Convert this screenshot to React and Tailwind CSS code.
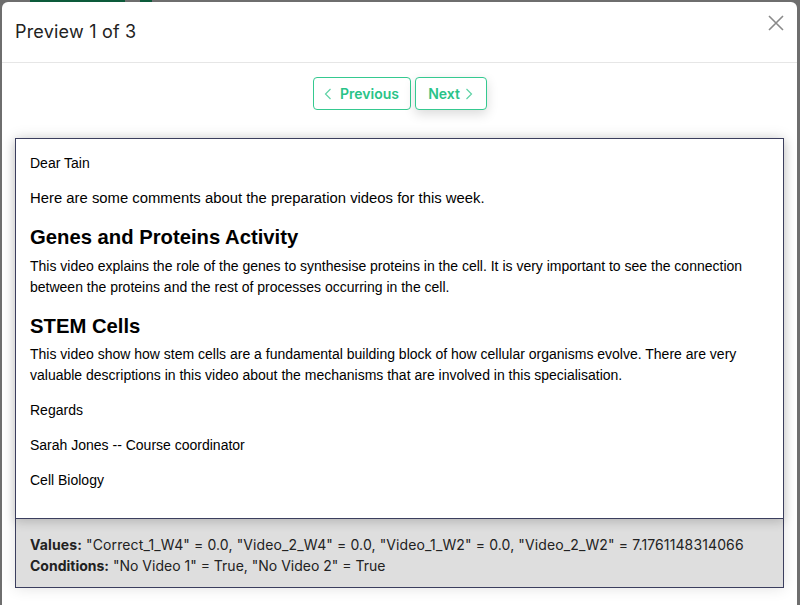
import React from "react";

export default function App() {
  return (
    <div className="w-[800px] h-[605px] overflow-hidden bg-[#6e6e6e] relative">
      <div className="h-[2px] flex">
        <div className="ml-[30px] w-[95px] h-[2px] bg-[#0c5a3a]" />
        <div className="ml-[15px] w-[12px] h-[2px] bg-[#0c5a3a]" />
      </div>
      <div className="ml-[2px] w-[795px] h-[640px] bg-white rounded-t-[6px] font-['Inter','Noto_Sans',sans-serif]">
        <div className="h-[61px] border-b border-[#e6e6e6] flex items-center justify-between pl-[13px] pr-[12px]">
          <div className="text-[18px] text-[#222] leading-none tracking-[0.2px]">Preview 1 of 3</div>
          <svg width="18" height="18" viewBox="0 0 18 18" className="mt-[-18px]">
            <path d="M2 2 L16 16 M16 2 L2 16" stroke="#8a8a8a" strokeWidth="1.6" fill="none" />
          </svg>
        </div>
        <div className="flex justify-center gap-[4px] pt-[14px]">
          <button className="h-[33px] w-[98px] border border-[#35c990] rounded-[4px] flex items-center justify-center gap-[8px] text-[#29c388] text-[14px] font-semibold bg-white">
            <svg width="8" height="12" viewBox="0 0 8 12">
              <path d="M6.5 1 L1.5 6 L6.5 11" stroke="#5fd3a6" strokeWidth="1.2" fill="none" />
            </svg>
            Previous
          </button>
          <button className="h-[33px] w-[72px] border border-[#35c990] rounded-[4px] flex items-center justify-center gap-[5px] text-[#29c388] text-[14px] font-semibold bg-white shadow-[0_4px_12px_rgba(0,0,0,0.15)]">
            Next
            <svg width="8" height="12" viewBox="0 0 8 12">
              <path d="M1.5 1 L6.5 6 L1.5 11" stroke="#5fd3a6" strokeWidth="1.2" fill="none" />
            </svg>
          </button>
        </div>
        <div className="mx-[13px] mt-[28px] shadow-[0_0_14px_rgba(0,0,0,0.12)]">
          <div className="relative z-10 border border-[#3b3e5e] bg-white px-[14px] pt-[14px] pb-[14px] h-[381px] text-[14px] leading-[21px] text-black shadow-[0_3px_10px_rgba(0,0,0,0.18)] font-['Liberation_Sans',Arial,sans-serif]">
            <p className="mb-[14px]">Dear Tain</p>
            <p className="mb-[14px] text-[14.85px]">Here are some comments about the preparation videos for this week.</p>
            <h2 className="text-[20.25px] leading-[24px] font-bold mt-[16px] mb-[7px]">Genes and Proteins Activity</h2>
            <p className="mb-[14px]">This video explains the role of the genes to synthesise proteins in the cell. It is very important to see the connection between the proteins and the rest of processes occurring in the cell.</p>
            <h2 className="text-[20.25px] leading-[24px] font-bold mt-[16px] mb-[6px]">STEM Cells</h2>
            <p className="mb-[14px]">This video show how stem cells are a fundamental building block of how cellular organisms evolve. There are very valuable descriptions in this video about the mechanisms that are involved in this specialisation.</p>
            <p className="mb-[14px]">Regards</p>
            <p className="mb-[14px]">Sarah Jones -- Course coordinator</p>
            <p>Cell Biology</p>
          </div>
          <div className="border border-t-0 border-[#3b3e5e] bg-[#dedede] pl-[14px] pt-[15px] pb-[11px] text-[14px] leading-[21px] text-[#222]">
            <div className="tracking-[0.12px]"><span className="font-bold">Values:</span> "Correct_1_W4" = 0.0, "Video_2_W4" = 0.0, "Video_1_W2" = 0.0, "Video_2_W2" = 7.1761148314066</div>
            <div><span className="font-bold">Conditions:</span> "No Video 1" = True, "No Video 2" = True</div>
          </div>
        </div>
      </div>
    </div>
  );
}
